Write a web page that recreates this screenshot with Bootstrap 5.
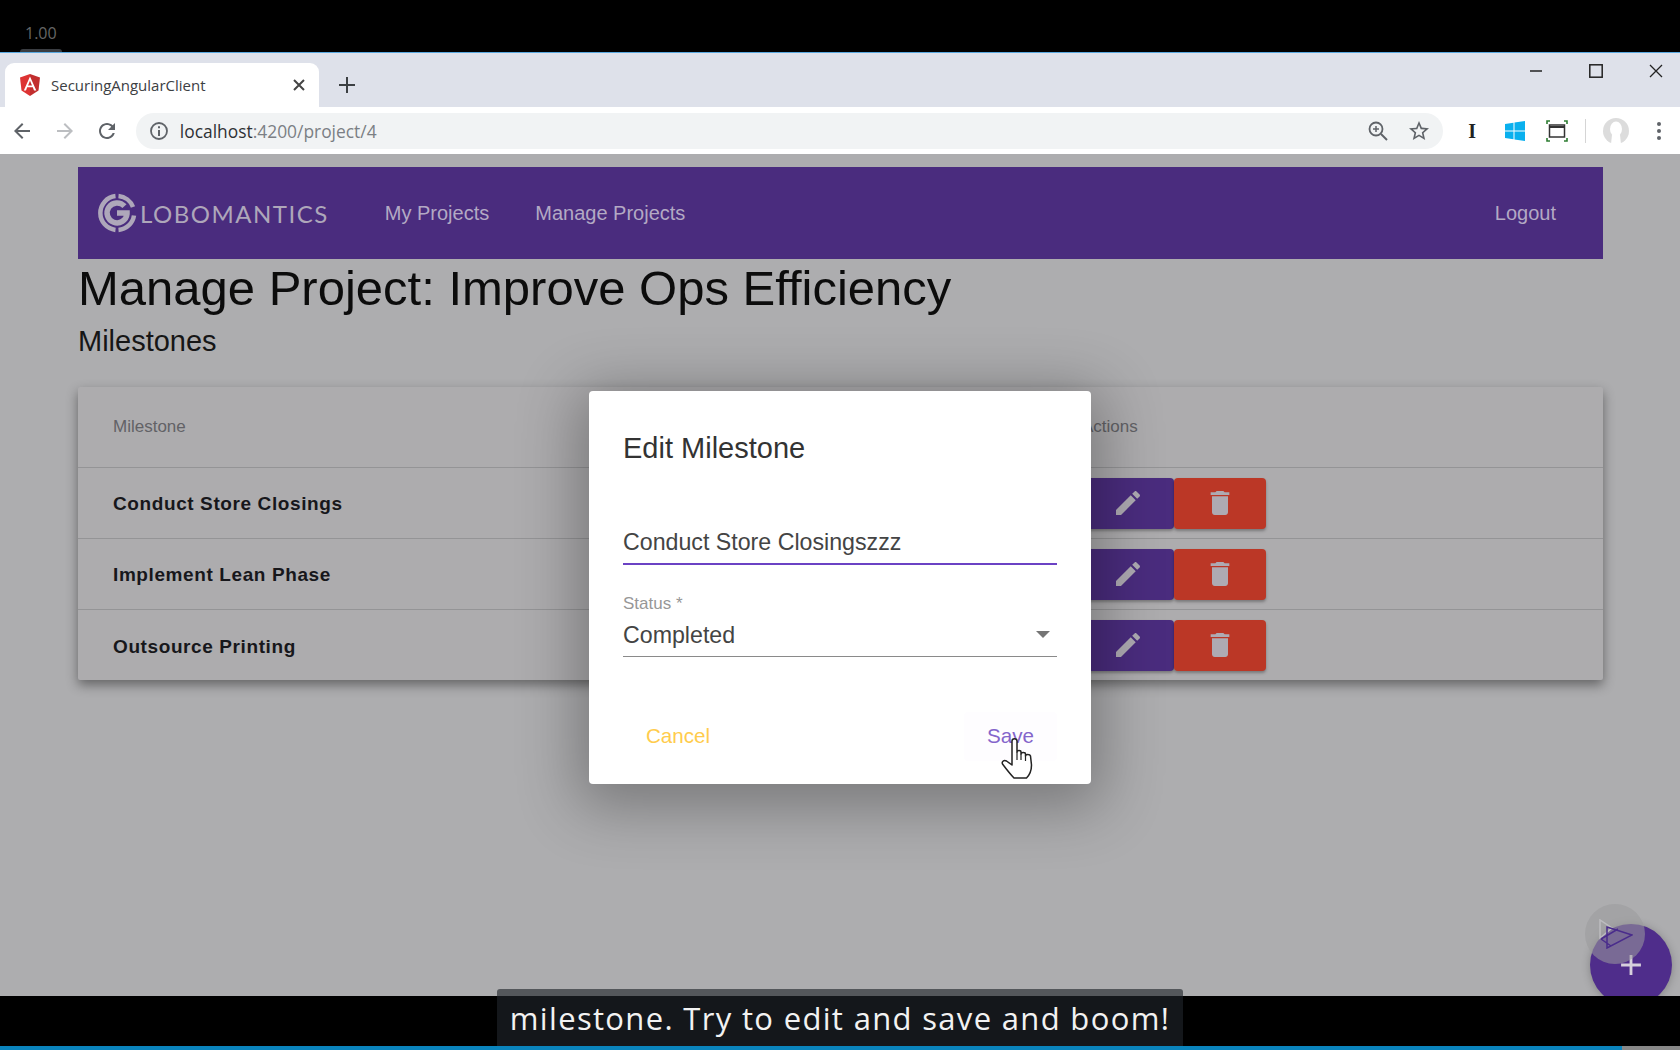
<!DOCTYPE html>
<html lang="en">
<head>
  <meta charset="UTF-8">
  <title>SecuringAngularClient</title>
  <link href="https://cdn.jsdelivr.net/npm/bootstrap@5.3.3/dist/css/bootstrap.min.css" rel="stylesheet">
  <style>
    html, body { margin: 0; height: 100%; background: #000; overflow: hidden; }
    body { font-family: "Liberation Sans", Arial, sans-serif; }
    .shell { width: 1680px; height: 1050px; position: relative; overflow: hidden; }
    .player-top { height: 52px; background: #000; color: #666; font: 16px "Open Sans", sans-serif; padding: 22px 0 0 25px; position: relative; }
    .player-top::after { content: ""; position: absolute; left: 20px; bottom: 0; width: 42px; height: 3px; background: #3a3d42; border-radius: 3px 3px 0 0; }
    .win-frame { border-top: 1px solid #5aa9e0; }
    .tabstrip { height: 54px; background: #dee1ea; position: relative; padding: 10px 0 0 5px; }
    .tab-live { width: 314px; height: 44px; background: #fff; border-radius: 9px 9px 0 0; padding: 0 14px 0 15px; font: 15px "Open Sans", sans-serif; color: #3c4043; }
    .tab-title { margin-left: 11px; }
    .new-tab { margin-left: 20px; }
    .win-btns { position: absolute; top: 5px; right: -6px; }
    .win-btn { width: 60px; height: 26px; }
    .toolbar { height: 47px; background: #fff; padding-left: 1px; }
    .tool-btn { width: 42.5px; height: 36px; }
    .urlbar { width: 1309px; height: 36px; margin-left: 7.5px; margin-right: 8px; background: #f1f3f4; border-radius: 18px; padding: 0 12px 0 13px; font: 17.4px "Open Sans", sans-serif; color: #7b7f84; }
    .url-host { color: #2f3134; }
    .url-text { margin-left: 11px; }
    .zoom-ic { margin-right: 18px; }
    .ext-btn { width: 42.5px; height: 36px; }
    .ext-sep { width: 1px; height: 24px; background: #d5d5d5; margin: 0 9px 0 7px; }
    .stage { height: 842px; background: #adadaf; position: relative; overflow: hidden; padding: 13px 77px 0 78px; }
    .topnav { height: 92px; background: #4a2c7e; padding: 0 0 0 19px; }
    .logo-word { font: 400 24px Lato, sans-serif; letter-spacing: 1.5px; color: #aea7ba; margin-left: 3px; }
    .topnav .navbar-nav .nav-link { font-size: 20px; color: #b3a9c4; padding: 0; }
    .nav-gap { margin-left: 56px; gap: 46px; }
    .logout-link { margin-right: 47px; }
    .page-title { font-size: 49px; line-height: 56px; color: #0c0c0c; margin: 1px 0 0; font-weight: 400; }
    .page-sub { font-size: 29px; line-height: 34px; color: #161616; margin: 8px 0 29px; font-weight: 400; }
    .ms-card { background: #adacae; border: 0; border-radius: 2px; box-shadow: 0 5px 12px rgba(0,0,0,.42); }
    .ms-table { margin: 0; --bs-table-bg: transparent; table-layout: fixed; }
    .ms-table th { height: 80px; font-size: 17px; font-weight: 400; color: #626266; vertical-align: middle; padding: 0 0 0 35px; border-bottom: 1px solid #949496; }
    .ms-table th.name-col { width: 1004px; }
    .ms-table td { height: 71px; vertical-align: middle; padding: 4px 0 0 35px; font-size: 19px; font-weight: 700; letter-spacing: .6px; color: #17171b; border-bottom: 1px solid #949496; }
    .ms-table tr:last-child td { border-bottom: 0; }
    .ms-table td.act-col { padding: 1px 0 0; }
    .ms-table th.act-col { padding-left: 0; }
    .act-btn { width: 92px; height: 51px; border: 0; border-radius: 4px; padding: 0; box-shadow: 0 2px 3px rgba(0,0,0,.3); }
    .act-edit { background: #4a2c7e; }
    .act-del { background: #bb3726; }
    .act-icon { width: 32px; height: 32px; fill: #aeaab2; }
    .dlg-box { position: absolute; left: 589px; top: 237px; width: 502px; height: 393px; background: #fff; border-radius: 4px; padding: 0 34px; box-shadow: 0 11px 60px 12px rgba(0,0,0,.3); }
    .dlg-title { font-size: 29px; font-weight: 400; line-height: 34px; color: #333; margin: 40px 0 0; }
    .field-input { margin-top: 56px; font-size: 23.2px; line-height: 32px; color: #444; height: 44px; border-bottom: 2px solid #6b42c4; }
    .field-label { margin-top: 29px; font-size: 17px; line-height: 20px; color: #979797; }
    .field-select { margin-top: -1px; font-size: 23.2px; line-height: 32px; color: #444; height: 44px; border-bottom: 1px solid #8a8a8a; padding-right: 7px; }
    .sel-caret { width: 0; height: 0; border-left: 7px solid transparent; border-right: 7px solid transparent; border-top: 7px solid #757575; }
    .dlg-actions { margin-top: 55px; }
    .dlg-btn { font-size: 20.6px; padding: 9px 23px; border: 0; border-radius: 4px; background: none; }
    .dlg-cancel { color: #ffcc4d; }
    .dlg-save { color: #8465cb; background: #fefdff; }
    .hand-cursor { position: absolute; left: 412px; top: 347px; width: 32px; height: 41px; }
    .fab-add { position: absolute; left: 1590px; top: 770px; width: 82px; height: 82px; background: #4f2d8b; border: 0; border-radius: 50%; padding: 0; box-shadow: 0 1px 8px rgba(0,0,0,.25); }
    .fab-plus { width: 34px; height: 34px; fill: #d6d0dc; }
    .ps-mark { position: absolute; left: 1585px; top: 750px; width: 60px; height: 60px; border-radius: 50%; background: rgba(155,155,157,.56); }
    .player-bottom { height: 50px; background: #000; }
    .progress-line { height: 4px; background: #888; }
    .progress-done { width: 1622px; height: 4px; background: #0a84bd; }
    .caption-box { position: absolute; left: 497px; top: 989px; width: 686px; height: 57px; background: rgba(32,37,43,.63); border-radius: 3px 3px 0 0; color: #f2f2f2; font: 31px "Open Sans", sans-serif; letter-spacing: 1.33px; white-space: nowrap; }
  </style>
</head>
<body>
  <svg width="0" height="0" class="position-absolute">
    <symbol id="ic-edit" viewBox="0 0 24 24"><path d="M3 17.25V21h3.75L17.81 9.94l-3.75-3.75L3 17.25zM20.71 7.04c.39-.39.39-1.02 0-1.41l-2.34-2.34c-.39-.39-1.02-.39-1.41 0l-1.83 1.83 3.75 3.75 1.83-1.83z"/></symbol>
    <symbol id="ic-trash" viewBox="0 0 24 24"><path d="M6 19c0 1.1.9 2 2 2h8c1.1 0 2-.9 2-2V7H6v12zM19 4h-3.5l-1-1h-5l-1 1H5v2h14V4z"/></symbol>
  </svg>

  <div class="shell">
    <div class="player-top">1.00</div>

    <div class="win-frame">
      <div class="tabstrip d-flex">
        <div class="tab-live d-flex align-items-center">
          <svg width="20" height="22" viewBox="0 0 20 22"><path fill="#dd3333" d="M10 0 0 3.5l1.5 13L10 22z"/><path fill="#c22e2e" d="M10 0l10 3.5-1.5 13L10 22z"/><path fill="#fff" d="M10 2.5 3.8 16.4H6l1.2-3.1h5.6l1.2 3.1h2.3zM8 11.5l2-4.7 2 4.7z"/></svg>
          <span class="tab-title flex-grow-1">SecuringAngularClient</span>
          <svg width="12" height="12" viewBox="0 0 12 12"><path stroke="#444" stroke-width="2" d="M1 1l10 10M11 1 1 11"/></svg>
        </div>
        <div class="new-tab d-flex align-items-center">
          <svg width="16" height="16" viewBox="0 0 16 16"><path stroke="#3c4043" stroke-width="2" d="M8 0v16M0 8h16"/></svg>
        </div>
        <div class="win-btns d-flex">
          <div class="win-btn d-flex align-items-center justify-content-center"><svg width="14" height="14" viewBox="0 0 14 14"><path stroke="#222" stroke-width="1.5" d="M1 7h12"/></svg></div>
          <div class="win-btn d-flex align-items-center justify-content-center"><svg width="14" height="14" viewBox="0 0 14 14"><rect x=".8" y=".8" width="12.4" height="12.4" fill="none" stroke="#222" stroke-width="1.5"/></svg></div>
          <div class="win-btn d-flex align-items-center justify-content-center"><svg width="14" height="14" viewBox="0 0 14 14"><path stroke="#222" stroke-width="1.3" d="M1 1l12 12M13 1 1 13"/></svg></div>
        </div>
      </div>

      <div class="toolbar d-flex align-items-center">
        <div class="tool-btn d-flex align-items-center justify-content-center"><svg width="24" height="24" viewBox="0 0 24 24" fill="#5f6368"><path d="M20 11H7.83l5.59-5.59L12 4l-8 8 8 8 1.41-1.41L7.83 13H20v-2z"/></svg></div>
        <div class="tool-btn d-flex align-items-center justify-content-center"><svg width="24" height="24" viewBox="0 0 24 24" fill="#bcbec1"><path d="M4 11h12.17l-5.59-5.59L12 4l8 8-8 8-1.41-1.41L16.17 13H4v-2z"/></svg></div>
        <div class="tool-btn d-flex align-items-center justify-content-center"><svg width="24" height="24" viewBox="0 0 24 24" fill="#5f6368"><path d="M17.65 6.35C16.2 4.9 14.21 4 12 4c-4.42 0-7.99 3.58-7.99 8s3.57 8 7.99 8c3.73 0 6.84-2.55 7.73-6h-2.08c-.82 2.33-3.04 4-5.65 4-3.31 0-6-2.69-6-6s2.69-6 6-6c1.66 0 3.14.69 4.22 1.78L13 11h7V4l-2.35 2.35z"/></svg></div>
        <div class="urlbar d-flex align-items-center">
          <svg width="20" height="20" viewBox="0 0 20 20"><circle cx="10" cy="10" r="8" fill="none" stroke="#5f6368" stroke-width="1.8"/><path stroke="#5f6368" stroke-width="2" d="M10 9v6M10 5.2v2"/></svg>
          <span class="url-text flex-grow-1"><span class="url-host">localhost</span>:4200/project/4</span>
          <svg width="22" height="22" viewBox="0 0 22 22" class="zoom-ic"><circle cx="9" cy="9" r="6.5" fill="none" stroke="#5f6368" stroke-width="1.8"/><path stroke="#5f6368" stroke-width="2" d="M14 14l6 6"/><path stroke="#5f6368" stroke-width="1.5" d="M9 6v6M6 9h6"/></svg>
          <svg width="24" height="24" viewBox="0 0 24 24" fill="#5f6368"><path d="M22 9.24l-7.19-.62L12 2 9.19 8.63 2 9.24l5.46 4.73L5.82 21 12 17.27 18.18 21l-1.63-7.03L22 9.24zM12 15.4l-3.76 2.27 1-4.28-3.32-2.88 4.38-.38L12 6.1l1.71 4.04 4.38.38-3.32 2.88 1 4.28L12 15.4z"/></svg>
        </div>
        <div class="ext-btn d-flex align-items-center justify-content-center fw-bold" style="font-family:'Liberation Serif',serif;font-size:20px;color:#222">I</div>
        <div class="ext-btn d-flex align-items-center justify-content-center"><svg width="20" height="20" viewBox="0 0 20 20" fill="#0ab0ee"><path d="M0 3l8.5-1.2v7.7H0zM9.500 1.600 20 0v9.500H9.500zM0 10.500h8.500v7.700L0 17zM9.500 10.500H20V20L9.500 18.400z"/></svg></div>
        <div class="ext-btn d-flex align-items-center justify-content-center"><svg width="22" height="22" viewBox="0 0 22 22"><path fill="none" stroke="#2e7d32" stroke-width="1.6" d="M1 4V1h3M18 1h3v3M21 18v3h-3M4 21H1v-3"/><rect x="3.5" y="5" width="15" height="12" fill="none" stroke="#333" stroke-width="1.5"/><path stroke="#333" stroke-width="2" d="M3.5 7h15"/></svg></div>
        <div class="ext-sep"></div>
        <div class="ext-btn d-flex align-items-center justify-content-center"><svg width="26" height="26" viewBox="0 0 26 26"><circle cx="13" cy="13" r="13" fill="#dcdcdc"/><ellipse cx="13" cy="11" rx="6" ry="7.5" fill="#fff"/><path fill="#fff" d="M9 17h8l1 9H8z"/></svg></div>
        <div class="ext-btn d-flex align-items-center justify-content-center"><svg width="6" height="20" viewBox="0 0 6 20" fill="#5f6368"><circle cx="3" cy="3" r="2"/><circle cx="3" cy="10" r="2"/><circle cx="3" cy="17" r="2"/></svg></div>
      </div>
    </div>

    <div class="stage">
      <nav class="topnav navbar navbar-expand d-flex align-items-center">
        <a class="d-flex align-items-center text-decoration-none" href="#">
          <svg width="40" height="40" viewBox="0 0 40 40" fill="none" stroke="#aea7ba"><path stroke-width="4.500" d="M18.500 3.100A17 17 0 0 0 18.500 36.900M21.500 3.100A17 17 0 0 1 36 14M37 22.500A17 17 0 0 1 21.500 36.900"/><path stroke-width="5.500" d="M27.500 13.200A10 10 0 1 0 30 21V20H20"/></svg>
          <span class="logo-word">LOBOMANTICS</span>
        </a>
        <ul class="navbar-nav nav-gap">
          <li class="nav-item"><a class="nav-link" href="#">My Projects</a></li>
          <li class="nav-item"><a class="nav-link" href="#">Manage Projects</a></li>
        </ul>
        <ul class="navbar-nav ms-auto logout-link">
          <li class="nav-item"><a class="nav-link" href="#">Logout</a></li>
        </ul>
      </nav>

      <h1 class="page-title">Manage Project: Improve Ops Efficiency</h1>
      <h2 class="page-sub">Milestones</h2>

      <div class="card ms-card">
        <table class="table ms-table">
          <thead>
            <tr><th class="name-col">Milestone</th><th class="act-col">Actions</th></tr>
          </thead>
          <tbody id="msRows"></tbody>
        </table>
      </div>

      <button class="fab-add d-flex align-items-center justify-content-center" type="button"><svg class="fab-plus" viewBox="0 0 24 24"><path d="M19 13h-6v6h-2v-6H5v-2h6V5h2v6h6v2z"/></svg></button>
      <div class="ps-mark d-flex align-items-center justify-content-center"><svg width="36" height="30" viewBox="0 0 36 30" fill="none" stroke-width="1.500"><path stroke="#bdbdc0" d="M3 1v18l12-10z"/><path stroke="#4a2c8c" d="M10 8v21l25-13zM4 20 21 10M4 20l10 7"/></svg></div>

      <div class="dlg-box">
        <h4 class="dlg-title">Edit Milestone</h4>
        <div class="field-input d-flex align-items-center">Conduct Store Closingszzz</div>
        <div class="field-label">Status *</div>
        <div class="field-select d-flex align-items-center justify-content-between"><span>Completed</span><span class="sel-caret"></span></div>
        <div class="dlg-actions d-flex justify-content-between">
          <button class="btn dlg-btn dlg-cancel" type="button">Cancel</button>
          <button class="btn dlg-btn dlg-save" type="button">Save</button>
        </div>
        <svg class="hand-cursor" viewBox="0 0 32 41"><path fill="#fff" stroke="#222" stroke-width="1.500" stroke-linejoin="round" d="M11 3c0-3 5-3 5 0v11c0-2 4-2 4 0v2c0-2 4.500-2 4.500 0v2c0-2 4.500-2 5 0l1 9c0 6-2 10-5 13H13C10 37 6 32 1.500 26c-1-2 1-4.500 4-3l5.500 4z"/><path fill="none" stroke="#222" stroke-width="1.200" d="M16 14v8M20 16v6M24.500 18v5"/></svg>
      </div>
    </div>

    <div class="player-bottom"></div>
    <div class="progress-line"><div class="progress-done"></div></div>
    <div class="caption-box d-flex align-items-center justify-content-center">milestone. Try to edit and save and boom!</div>
  </div>

  <script type="text/javascript">
    const hitos = ['Conduct Store Closings', 'Implement Lean Phase', 'Outsource Printing'];
    document.getElementById('msRows').innerHTML = hitos.map(h => `
      <tr>
        <td>${h}</td>
        <td class="act-col">
          <div class="d-flex">
            <button class="btn act-btn act-edit d-flex align-items-center justify-content-center" type="button"><svg class="act-icon"><use href="#ic-edit"/></svg></button>
            <button class="btn act-btn act-del d-flex align-items-center justify-content-center" type="button"><svg class="act-icon"><use href="#ic-trash"/></svg></button>
          </div>
        </td>
      </tr>`).join('');
  </script>
  <script src="https://cdn.jsdelivr.net/npm/bootstrap@5.3.3/dist/js/bootstrap.bundle.min.js"></script>
</body>
</html>
